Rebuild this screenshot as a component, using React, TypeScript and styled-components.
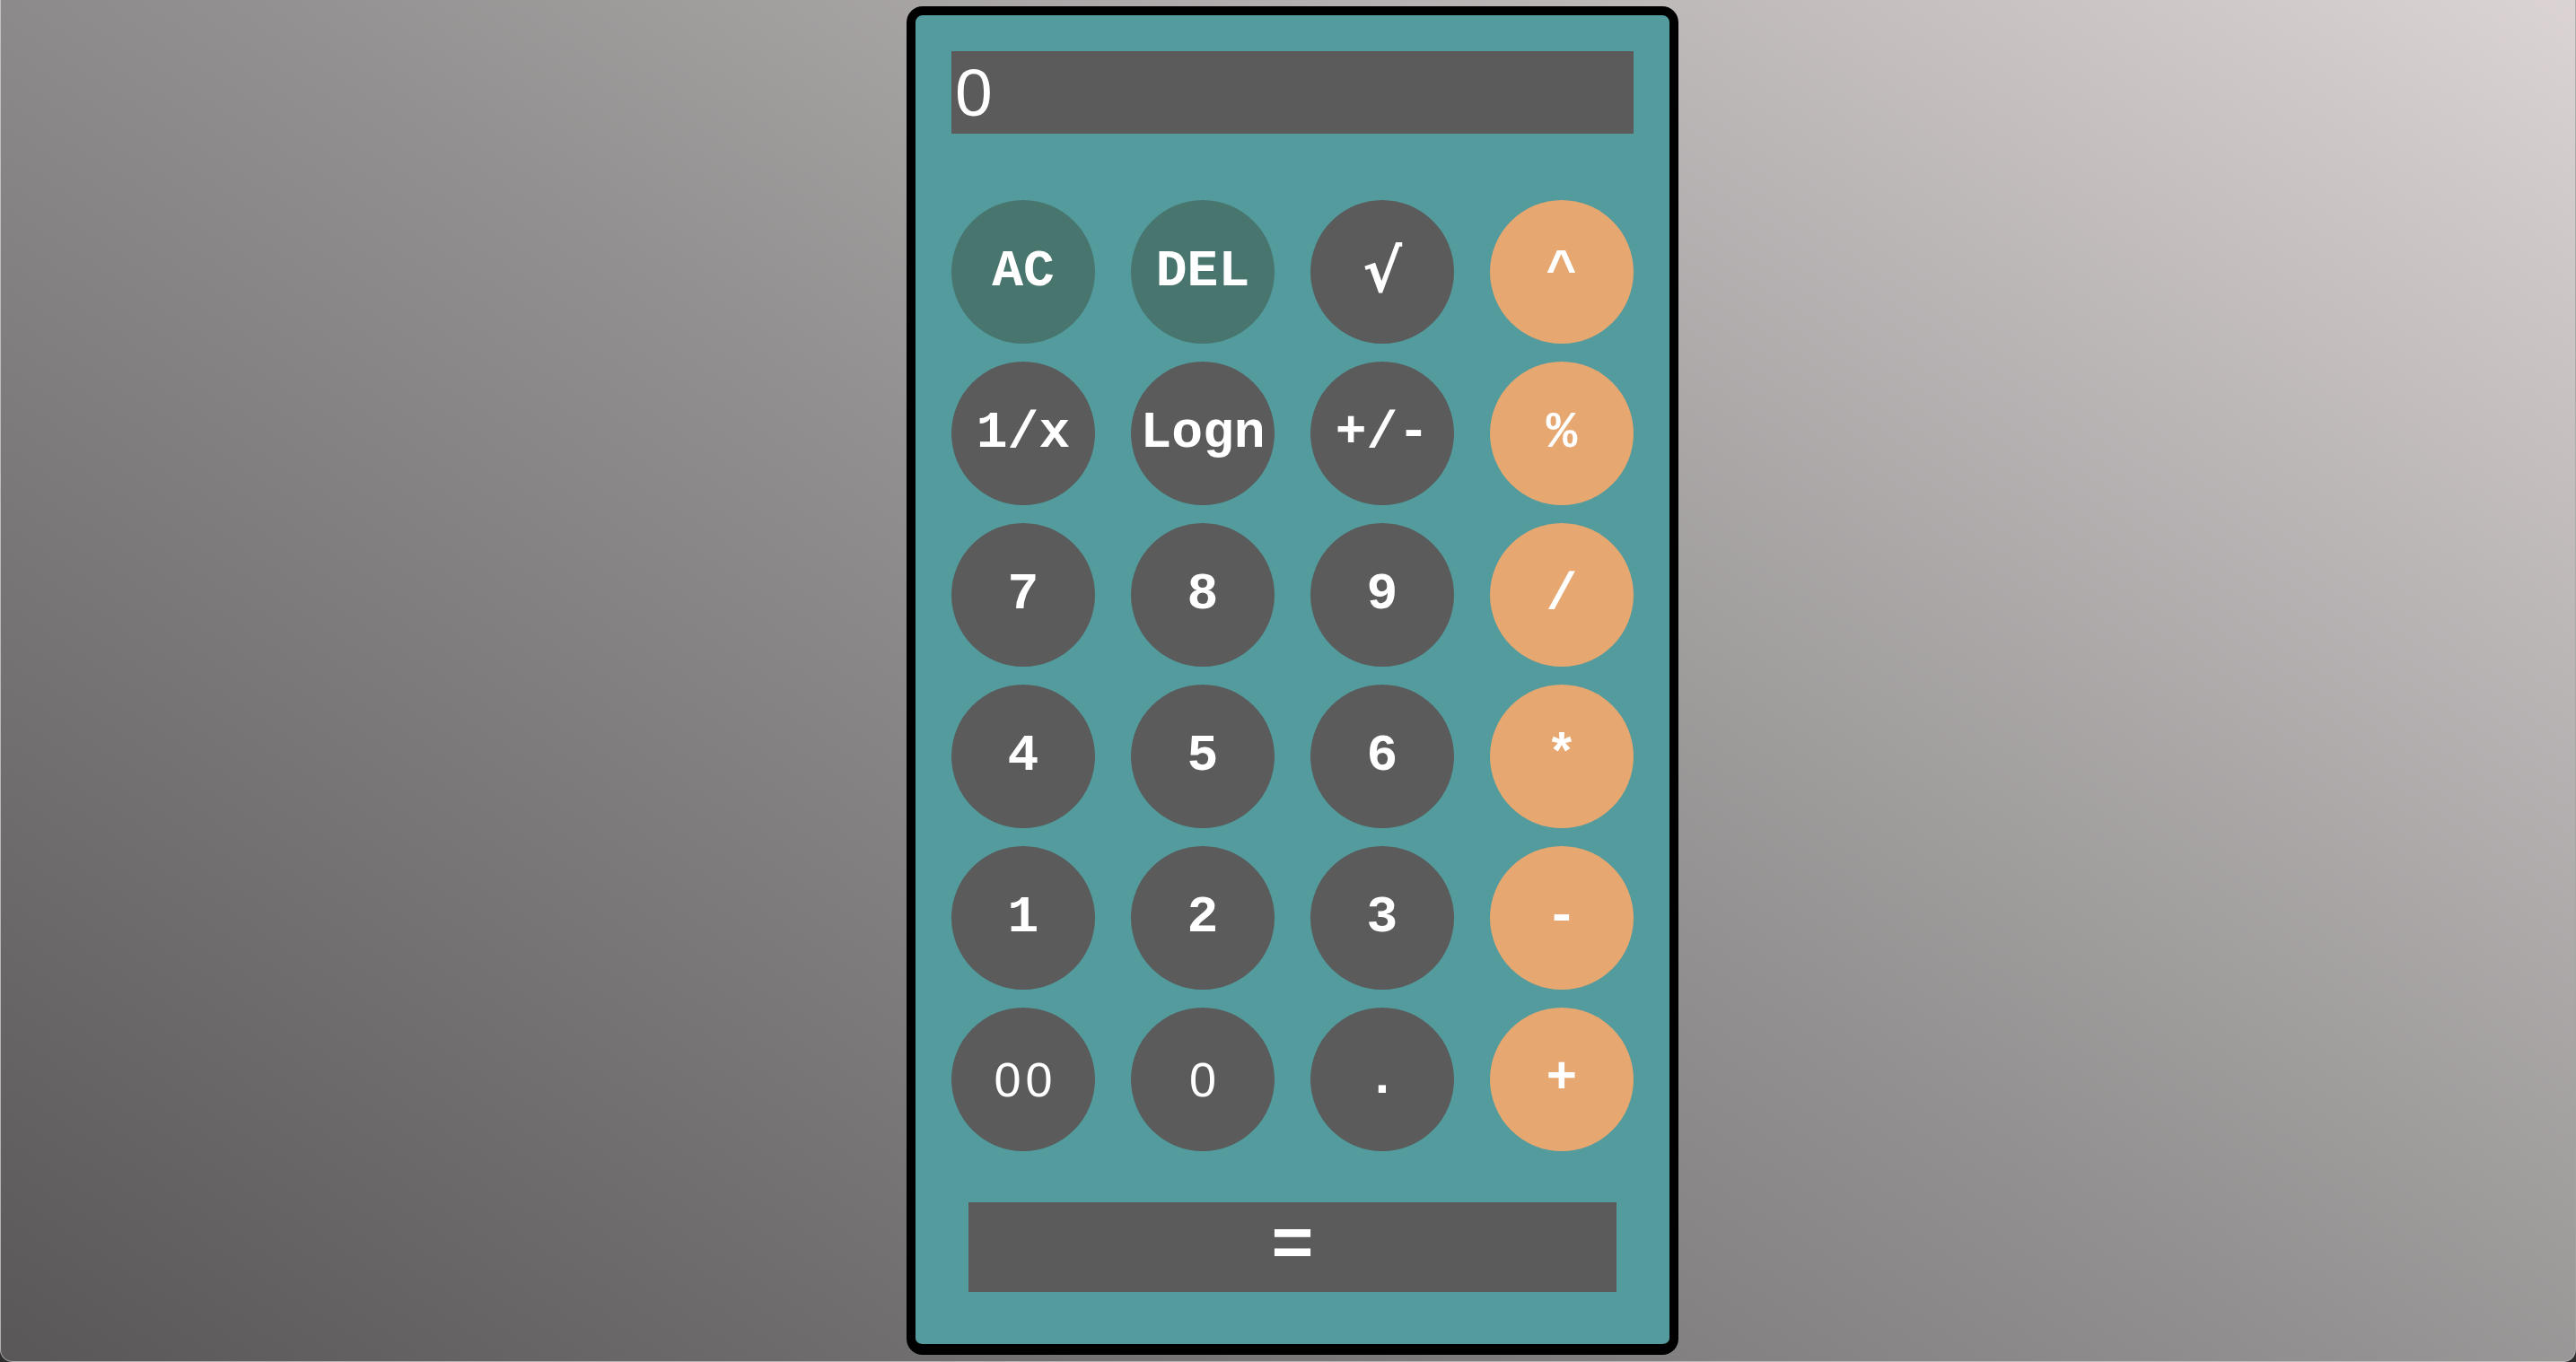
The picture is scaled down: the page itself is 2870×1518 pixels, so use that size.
import React from "react";
import styled, { createGlobalStyle, css } from "styled-components";

const GlobalStyle = createGlobalStyle`
  html, body {
    margin: 0;
    padding: 0;
    background: #2e2d2d;
  }
  * { box-sizing: border-box; }
`;

const Page = styled.div`
  width: 100vw;
  height: 100vh;
  display: flex;
  justify-content: center;
  align-items: flex-start;
  padding: 7px 0 0 10px;
  background: linear-gradient(33deg, #595757 0%, #929090 50%, #dbd3d4 100%);
  border: 1px solid rgba(190, 186, 186, 0.75);
  border-top: none;
  border-radius: 0 0 14px 14px;
  overflow: hidden;
`;

const Calculator = styled.div`
  width: 860px;
  height: 1503px;
  display: flex;
  flex-direction: column;
  padding: 40px;
  background: #539b9d;
  border: 10px solid #000;
  border-bottom-width: 12px;
  border-radius: 18px;
`;

const Screen = styled.div`
  height: 92px;
  display: flex;
  align-items: center;
  padding-left: 4px;
  background: #5b5b5b;
  color: #fff;
  font-family: "Liberation Sans", Arial, sans-serif;
  font-size: 75px;
  line-height: 1;
`;

const Keypad = styled.div`
  margin-top: 74px;
  display: grid;
  grid-template-columns: repeat(4, 160px);
  grid-auto-rows: 160px;
  column-gap: 40px;
  row-gap: 20px;
`;

type Variant = "num" | "clear" | "op";
type Face = "mono" | "plain" | "big";

const keyColors: Record<Variant, string> = {
  num: "#5b5b5b",
  clear: "#48766f",
  op: "#e6a770",
};

const faces = {
  mono: css`
    font-family: "Courier New", "Liberation Mono", monospace;
    font-weight: 700;
    font-size: 58px;
  `,
  plain: css`
    font-family: "Liberation Sans", Arial, sans-serif;
    font-weight: 400;
    font-size: 54px;
    letter-spacing: 5px;
    text-indent: 5px;
  `,
  big: css`
    font-family: "DejaVu Sans", sans-serif;
    font-weight: 700;
    font-size: 66px;
  `,
};

const Key = styled.button<{ $variant: Variant; $face: Face }>`
  width: 160px;
  height: 160px;
  border: none;
  border-radius: 50%;
  padding: 0;
  display: flex;
  align-items: center;
  justify-content: center;
  background: ${(p) => keyColors[p.$variant]};
  color: #fff;
  line-height: 1;
  cursor: pointer;
  ${(p) => faces[p.$face]}
`;

const EqualsKey = styled.button`
  margin-top: 57px;
  align-self: center;
  width: 95%;
  height: 100px;
  border: none;
  padding: 0;
  background: #5b5b5b;
  color: #fff;
  font-family: "Courier New", "Liberation Mono", monospace;
  font-weight: 700;
  font-size: 80px;
  line-height: 1;
  cursor: pointer;
`;

const keys: { label: string; variant: Variant; face?: Face }[] = [
  { label: "AC", variant: "clear" },
  { label: "DEL", variant: "clear" },
  { label: "√", variant: "num", face: "big" },
  { label: "^", variant: "op" },
  { label: "1/x", variant: "num" },
  { label: "Logn", variant: "num" },
  { label: "+/-", variant: "num" },
  { label: "%", variant: "op" },
  { label: "7", variant: "num" },
  { label: "8", variant: "num" },
  { label: "9", variant: "num" },
  { label: "/", variant: "op" },
  { label: "4", variant: "num" },
  { label: "5", variant: "num" },
  { label: "6", variant: "num" },
  { label: "*", variant: "op" },
  { label: "1", variant: "num" },
  { label: "2", variant: "num" },
  { label: "3", variant: "num" },
  { label: "-", variant: "op" },
  { label: "00", variant: "num", face: "plain" },
  { label: "0", variant: "num", face: "plain" },
  { label: ".", variant: "num" },
  { label: "+", variant: "op" },
];

export default function App() {
  return (
    <>
      <GlobalStyle />
      <Page>
        <Calculator>
          <Screen>0</Screen>
          <Keypad>
            {keys.map((k) => (
              <Key key={k.label} $variant={k.variant} $face={k.face ?? "mono"}>
                {k.label}
              </Key>
            ))}
          </Keypad>
          <EqualsKey>=</EqualsKey>
        </Calculator>
      </Page>
    </>
  );
}
